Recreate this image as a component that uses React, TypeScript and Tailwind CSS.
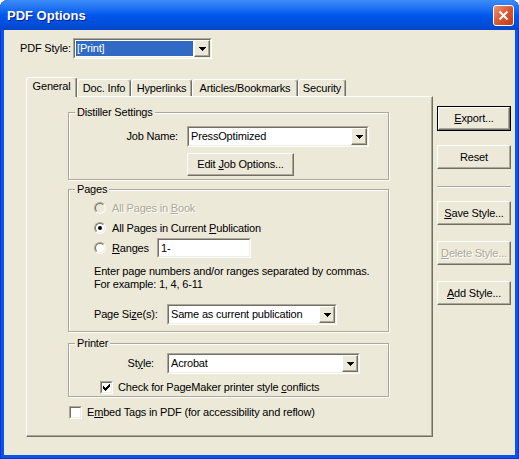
import type { ReactNode } from "react";

const raised =
  "border border-t-white border-l-white border-b-[#716F64] border-r-[#716F64] shadow-[inset_-1px_-1px_0_#ACA899]";
const sunkenOuter =
  "border border-t-[#ACA899] border-l-[#ACA899] border-b-white border-r-white";
const sunkenInner =
  "border border-t-[#716F64] border-l-[#716F64] border-b-[#F1EFE2] border-r-[#F1EFE2]";
const disabledText = "text-[#ACA899] [text-shadow:1px_1px_0_#ffffff]";

function DropArrow() {
  return (
    <div className={`flex h-full w-[16px] shrink-0 items-center justify-center bg-[#ECE9D8] ${raised}`}>
      <svg width="7" height="4" viewBox="0 0 7 4" shapeRendering="crispEdges">
        <path d="M0 0h7v1h-7z M1 1h5v1h-5z M2 2h3v1h-3z M3 3h1v1h-1z" fill="#000" />
      </svg>
    </div>
  );
}

function Combo({
  value,
  className,
  highlight = false,
}: {
  value: string;
  className: string;
  highlight?: boolean;
}) {
  return (
    <div className={`flex ${sunkenOuter} ${className}`}>
      <div className={`flex h-full flex-1 bg-white ${sunkenInner}`}>
        <div className="flex flex-1 p-[1px]">
          <div
            className={`flex flex-1 items-center px-[1px] ${
              highlight ? "bg-[#316AC5] text-white" : ""
            }`}
          >
            {value}
          </div>
        </div>
        <DropArrow />
      </div>
    </div>
  );
}

function TextField({ value, className }: { value: string; className: string }) {
  return (
    <div className={`flex ${sunkenOuter} ${className}`}>
      <div className={`flex h-full flex-1 items-center bg-white px-[2px] ${sunkenInner}`}>
        {value}
      </div>
    </div>
  );
}

function Button({
  children,
  className,
  isDefault = false,
  disabled = false,
}: {
  children: ReactNode;
  className: string;
  isDefault?: boolean;
  disabled?: boolean;
}) {
  const face = (
    <div
      className={`flex h-full w-full items-center justify-center bg-[#ECE9D8] ${raised} ${
        disabled ? disabledText : ""
      }`}
    >
      {children}
    </div>
  );
  if (isDefault) {
    return <div className={`border border-black ${className}`}>{face}</div>;
  }
  return <div className={className}>{face}</div>;
}

function Radio({ checked = false, disabled = false }: { checked?: boolean; disabled?: boolean }) {
  return (
    <div className="flex h-[12px] w-[12px] shrink-0 items-center justify-center rounded-full border border-t-[#ACA899] border-l-[#ACA899] border-b-white border-r-white">
      <div
        className={`flex h-[10px] w-[10px] items-center justify-center rounded-full border border-t-[#716F64] border-l-[#716F64] border-b-[#F1EFE2] border-r-[#F1EFE2] ${
          disabled ? "bg-[#ECE9D8]" : "bg-white"
        }`}
      >
        {checked && <div className="h-[4px] w-[4px] rounded-full bg-black" />}
      </div>
    </div>
  );
}

function Checkbox({ checked = false }: { checked?: boolean }) {
  return (
    <div className={`flex h-[13px] w-[13px] shrink-0 ${sunkenOuter}`}>
      <div className={`flex flex-1 items-center justify-center bg-white ${sunkenInner}`}>
        {checked && (
          <svg width="7" height="7" viewBox="0 0 7 7" shapeRendering="crispEdges">
            <path
              d="M6 0h1v1h-1z M5 1h2v1h-2z M0 2h1v1h-1z M4 2h3v1h-3z M0 3h2v1h-2z M3 3h3v1h-3z M0 4h5v1h-5z M1 5h3v1h-3z M2 6h1v1h-1z"
              fill="#000"
            />
          </svg>
        )}
      </div>
    </div>
  );
}

function Group({
  title,
  className,
  children,
}: {
  title: string;
  className: string;
  children: ReactNode;
}) {
  return (
    <div
      className={`relative border border-[#ACA899] shadow-[inset_1px_1px_0_#ffffff,1px_1px_0_#ffffff] ${className}`}
    >
      <div className="absolute -top-[7px] left-[6px] bg-[#ECE9D8] px-[2px] leading-[13px]">
        {title}
      </div>
      {children}
    </div>
  );
}

function Tab({
  label,
  className,
  selected = false,
}: {
  label: string;
  className: string;
  selected?: boolean;
}) {
  return (
    <div
      className={`flex items-center justify-center rounded-t-[3px] border-x border-t border-t-white border-l-white border-r-[#716F64] bg-[#ECE9D8] shadow-[inset_-1px_0_0_#ACA899] ${
        selected ? "relative z-10 -mb-[1px] h-[20px] pb-[2px]" : "h-[17px]"
      } ${className}`}
    >
      {label}
    </div>
  );
}

function CloseButton() {
  return (
    <div className="flex h-[21px] w-[21px] items-center justify-center rounded-[3px] border border-white bg-gradient-to-br from-[#EB9479] via-[#D9572F] to-[#C13A14]">
      <svg width="11" height="11" viewBox="0 0 11 11">
        <path d="M1.5 1.5 L9.5 9.5 M9.5 1.5 L1.5 9.5" stroke="#ffffff" strokeWidth="2" />
      </svg>
    </div>
  );
}

export default function App() {
  return (
    <div className="h-[459px] w-[519px] bg-white">
      <div className="flex h-[459px] w-[519px] flex-col overflow-hidden rounded-t-[8px] bg-[#0A55E6] font-['Liberation_Sans',Arial,sans-serif] text-[11px] leading-[13px] tracking-[-0.18px] text-black shadow-[inset_1px_0_0_#0831D9,inset_-1px_0_0_#0831D9,inset_0_-1px_0_#0831D9]">
        {/* title bar */}
        <div className="flex h-[30px] shrink-0 items-center justify-between bg-gradient-to-b from-[#3D8DF8] via-[#0058EE] to-[#0046CC] pl-[7px] pr-[5px]">
          <div className="text-[13px] font-bold tracking-normal text-white [text-shadow:1px_1px_0_#0A1E8A]">
            PDF Options
          </div>
          <CloseButton />
        </div>

        <div className="mx-[4px] mb-[4px] flex-1 bg-[#ECE9D8]">
          {/* PDF Style row */}
          <div className="flex items-center pl-[16px] pt-[8px]">
            <div className="w-[53px]">PDF Style:</div>
            <Combo value="[Print]" highlight className="h-[21px] w-[139px]" />
          </div>

          <div className="ml-[22px] mt-[18px] flex">
            {/* tab control */}
            <div className="flex w-[407px] flex-col">
              <div className="flex h-[19px] items-end">
                <Tab label="General" selected className="w-[51px]" />
                <Tab label="Doc. Info" className="w-[54px]" />
                <Tab label="Hyperlinks" className="w-[61px]" />
                <Tab label="Articles/Bookmarks" className="w-[106px]" />
                <Tab label="Security" className="w-[48px]" />
              </div>

              <div className={`h-[341px] w-[407px] pl-[41px] pt-[15px] ${raised}`}>
                <Group title="Distiller Settings" className="h-[68px] w-[321px]">
                  <div className="mt-[13px] flex items-center">
                    <div className="w-[109px] text-right">Job Name:</div>
                    <Combo value="PressOptimized" className="ml-[9px] h-[21px] w-[182px]" />
                  </div>
                  <Button className="ml-[118px] mt-[6px] h-[23px] w-[107px]">
                    <span>
                      Edit <u>J</u>ob Options...
                    </span>
                  </Button>
                </Group>

                <Group title="Pages" className="mt-[9px] h-[143px] w-[321px]">
                  <div className="pl-[25px] pt-[8px]">
                    <div className="flex h-[20px] items-center">
                      <Radio disabled />
                      <span className={`ml-[6px] ${disabledText}`}>
                        All Pages in <u>B</u>ook
                      </span>
                    </div>
                    <div className="flex h-[20px] items-center">
                      <Radio checked />
                      <span className="ml-[6px]">
                        All Pages in Current <u>P</u>ublication
                      </span>
                    </div>
                    <div className="flex h-[20px] items-center">
                      <Radio />
                      <span className="ml-[6px] w-[40px]">
                        <u>R</u>anges
                      </span>
                      <TextField value="1-" className="ml-[5px] h-[20px] w-[94px]" />
                    </div>
                    <div className="mt-[7px]">
                      <div>Enter page numbers and/or ranges separated by commas.</div>
                      <div>For example: 1, 4, 6-11</div>
                    </div>
                    <div className="mt-[13px] flex items-center">
                      <div className="w-[73px]">
                        Page Si<u>z</u>e(s):
                      </div>
                      <Combo value="Same as current publication" className="h-[21px] w-[170px]" />
                    </div>
                  </div>
                </Group>

                <Group title="Printer" className="mt-[11px] h-[54px] w-[321px]">
                  <div className="mt-[9px] flex items-center">
                    <div className="w-[85px] text-right">
                      St<u>y</u>le:
                    </div>
                    <Combo value="Acrobat" className="ml-[13px] h-[21px] w-[193px]" />
                  </div>
                  <div className="mt-[7px] flex h-[13px] items-center pl-[31px]">
                    <Checkbox checked />
                    <span className="ml-[5px]">
                      Check for PageMaker printer style <u>c</u>onflicts
                    </span>
                  </div>
                </Group>

                <div className="mt-[9px] flex h-[13px] items-center pl-[1px]">
                  <Checkbox />
                  <span className="ml-[5px]">
                    E<u>m</u>bed Tags in PDF (for accessibility and reflow)
                  </span>
                </div>
              </div>
            </div>

            {/* right column buttons */}
            <div className="ml-[4px] mt-[29px] flex w-[74px] flex-col">
              <Button isDefault className="h-[25px] w-[74px]">
                <span>
                  <u>E</u>xport...
                </span>
              </Button>
              <Button className="mt-[14px] h-[24px] w-[74px]">Reset</Button>
              <div className="mt-[17px] h-[2px] w-[74px] border-t border-t-[#ACA899] border-b border-b-white" />
              <Button className="mt-[13px] h-[24px] w-[74px]">
                <span>
                  <u>S</u>ave Style...
                </span>
              </Button>
              <Button disabled className="mt-[16px] h-[24px] w-[74px]">
                <span>
                  <u>D</u>elete Style...
                </span>
              </Button>
              <Button className="mt-[16px] h-[24px] w-[74px]">
                <span>
                  <u>A</u>dd Style...
                </span>
              </Button>
            </div>
          </div>
        </div>
      </div>
    </div>
  );
}
